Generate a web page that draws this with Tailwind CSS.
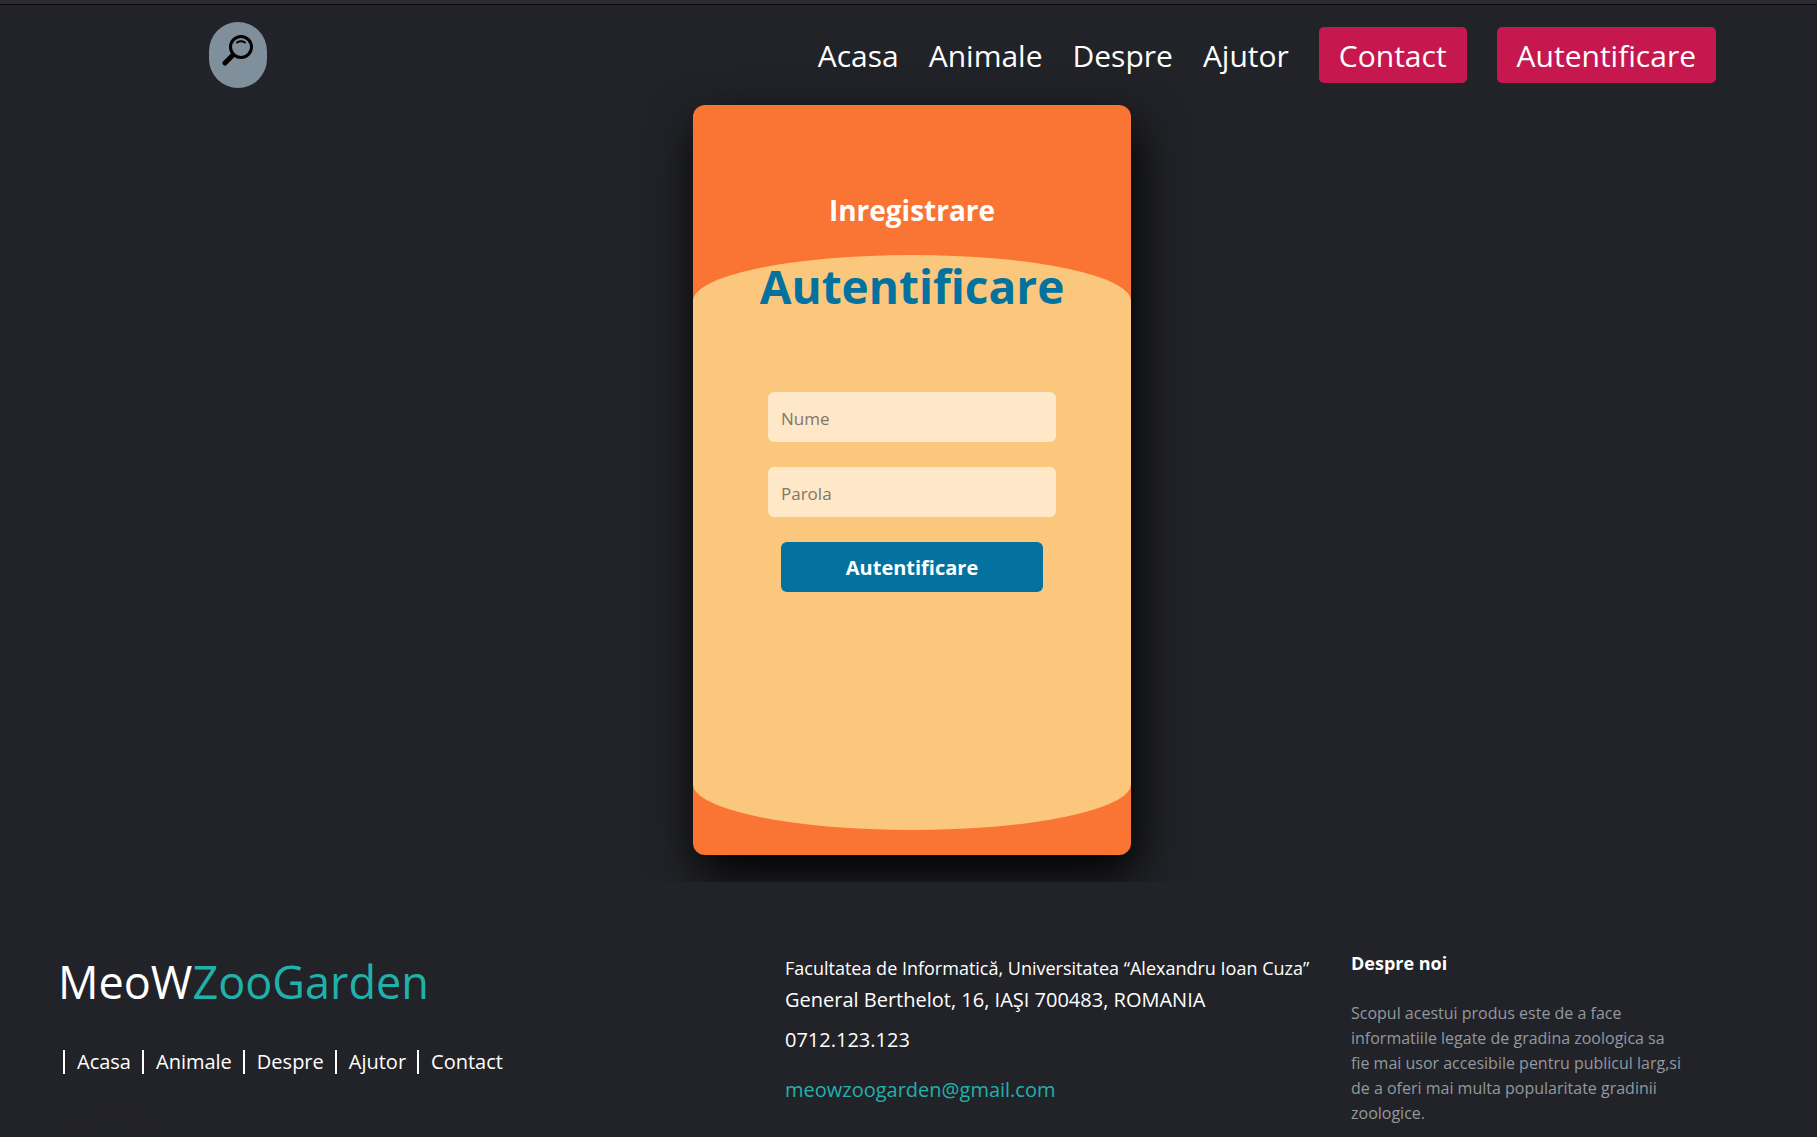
<!DOCTYPE html>
<html lang="en">
<head>
<meta charset="utf-8">
<meta name="viewport" content="width=device-width, initial-scale=1">
<title>MeoWZooGarden</title>
<script src="https://cdn.jsdelivr.net/npm/@tailwindcss/browser@4"></script>
</head>
<body class="flex min-h-screen flex-col overflow-x-hidden border-t-4 border-[#2b2a33] bg-[#222328] font-['Open_Sans',sans-serif] text-white">
  <header class="flex h-[101px] items-start justify-between border-t border-[#0c0c0d] pr-[101px] pl-[209px] pt-[17px]">
    <button type="button" aria-label="Cauta" class="flex h-[66px] w-[58px] justify-center rounded-[29px] bg-[#808f9c] pt-3">
      <svg class="h-8 w-8" viewBox="0 0 32 32" fill="none" stroke="#000" stroke-linecap="round">
        <circle cx="19" cy="13" r="10.500" stroke-width="3"/>
        <path d="M15 8.500Q19 6 23 8.500" stroke-width="2"/>
        <path d="M11.500 20.500L9.500 22.500" stroke-width="3"/>
        <path d="M9.500 22.500L3 29" stroke-width="5"/>
      </svg>
    </button>
    <nav class="flex items-center gap-[30px] pt-[5px] text-[30px] leading-[54px]">
      <a href="#" class="pt-0.5">Acasa</a>
      <a href="#" class="pt-0.5">Animale</a>
      <a href="#" class="pt-0.5">Despre</a>
      <a href="#" class="pt-0.5">Ajutor</a>
      <a href="#" class="rounded-[5px] bg-[#c6184e] px-5 pt-0.5">Contact</a>
      <a href="#" class="rounded-[5px] bg-[#c6184e] px-5 pt-0.5">Autentificare</a>
    </nav>
  </header>

  <main class="flex h-[777px] justify-center pl-[7px] [clip-path:inset(-100px_0_0_0)]">
    <section class="h-[750px] w-[438px] overflow-hidden rounded-[12px] bg-[#fa7433] shadow-[5px_20px_50px_#000]">
      <h2 class="pt-[85px] text-center text-[28px] leading-10 font-bold">Inregistrare</h2>
      <form class="mt-[25px] flex h-[575px] flex-col items-center rounded-[50%/8%] bg-[#fac77c]">
        <h1 class="text-[46px] leading-[62px] font-bold text-[#04729f]">Autentificare</h1>
        <input type="text" aria-label="Nume" placeholder="Nume" class="mt-[75px] h-[50px] w-72 rounded-[6px] bg-[#ffe8c8] px-[13px] pt-0.5 text-[17px] placeholder:text-[#7f7668]">
        <input type="password" aria-label="Parola" placeholder="Parola" class="mt-[25px] h-[50px] w-72 rounded-[6px] bg-[#ffe8c8] px-[13px] pt-0.5 text-[17px] placeholder:text-[#7f7668]">
        <button type="submit" class="mt-[25px] h-[50px] w-[262px] rounded-[6px] bg-[#04729f] pt-0.5 text-[20px] font-bold">Autentificare</button>
      </form>
    </section>
  </main>

  <footer class="grid flex-1 grid-cols-[727fr_566fr_466fr] pt-[65px] pl-[58px]">
    <div>
      <h3 class="text-[45px] leading-[70px]">MeoW<span class="text-[#20b2aa]">ZooGarden</span></h3>
      <ul class="mt-[33px] flex gap-[11px] pl-[5px] text-[20px] leading-6">
        <li class="border-l-2 border-white pl-3"><a href="#">Acasa</a></li>
        <li class="border-l-2 border-white pl-3"><a href="#">Animale</a></li>
        <li class="border-l-2 border-white pl-3"><a href="#">Despre</a></li>
        <li class="border-l-2 border-white pl-3"><a href="#">Ajutor</a></li>
        <li class="border-l-2 border-white pl-3"><a href="#">Contact</a></li>
      </ul>
      <p class="mt-[33px] text-base leading-6 text-[#222222]">MeoW © 2022</p>
    </div>
    <address class="pt-[5px] text-[20px] leading-8 not-italic">
      <p class="text-[18px]">Facultatea de Informatică, Universitatea “Alexandru Ioan Cuza”</p>
      <p>General Berthelot, 16, IAŞI 700483, ROMANIA</p>
      <p class="mt-2">0712.123.123</p>
      <a href="mailto:meowzoogarden@gmail.com" class="mt-[18px] block text-[#20b2aa]">meowzoogarden@gmail.com</a>
    </address>
    <div class="pt-1">
      <h4 class="text-[18px] leading-6 font-bold">Despre noi</h4>
      <p class="mt-[26px] w-[332px] text-base leading-[25px] text-[#92999f]">Scopul acestui produs este de a face informatiile legate de gradina zoologica sa fie mai usor accesibile pentru publicul larg,si de a oferi mai multa popularitate gradinii zoologice.</p>
    </div>
  </footer>
</body>
</html>
